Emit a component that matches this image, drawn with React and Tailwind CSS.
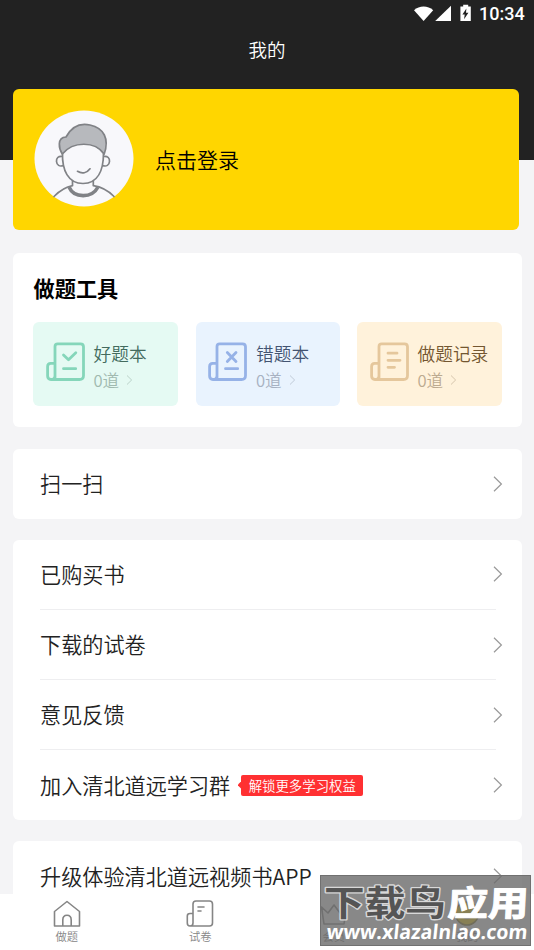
import React from "react";

function Chevron({ className = "" }) {
  return (
    <svg className={className} width="10" height="16" viewBox="0 0 10 16" fill="none" stroke="currentColor" strokeWidth="1.2">
      <path d="M1 .8 8.4 8 1 15.2" />
    </svg>
  );
}

function StatusBar() {
  return (
    <div className="flex h-7 items-center justify-end pr-[9px] text-white">
      <svg width="58" height="20" viewBox="0 0 58 20" fill="currentColor">
        <path d="M0 6.2C5.4 1.4 13.8 1.4 19.2 6.2L9.6 17Z" />
        <path d="M37 1.8V17H21.2Z" />
        <path d="M49.2 .8h5v1.6h2.6V17H46.4V2.4h2.8z" />
        <path d="M52.4 4.4 48.4 10.5h2.3L50.1 15.2 54.4 8.8h-2.4z" fill="#222" />
      </svg>
      <span className="ml-[7px] w-[46px] whitespace-nowrap font-['Roboto',sans-serif] text-[18px] font-medium leading-7">10:34</span>
    </div>
  );
}

function Avatar() {
  return (
    <svg className="-mt-[2px]" width="100" height="97" viewBox="0 0 100 97" fill="none" stroke="#808286" strokeWidth="1.7" strokeLinecap="round" strokeLinejoin="round">
      <ellipse cx="50" cy="48.5" rx="49.5" ry="48" fill="#f8f8fb" stroke="none" />
      <path d="M20 86.5C26 80.5 32 77 38.5 75.7V70M80 86.5C74 80.5 68 77 59.3 75.7V70" />
      <path d="M35 77C40 88.5 58 88.5 64 77" strokeWidth="3.6" strokeLinecap="butt" />
      <path d="M29 46.5C24 45.5 22.2 48.5 22.5 51.5C22.8 55 25.5 57 29.5 55.5M69 46.5C74 45.5 75.8 48.5 75.5 51.5C75.2 55 72.5 57 68.5 55.5" />
      <path d="M28.5 43C28 60 34 73.5 49 73.5S69.5 60 69.5 43C60 30 38 30 28.5 43Z" fill="#f8f8fb" />
      <path d="M28.3 44C25 39 22.5 27.5 32 27C38 16 47 13 56 15C70 18 75.5 29 70.2 44C61 31 39 31 28.3 44Z" fill="#b7b9bd" />
      <path d="M43.5 61.3C48 64.2 53 63 56 58.8" />
    </svg>
  );
}

function BookIcon({ kind }) {
  return (
    <svg className="mt-[19.5px] shrink-0" width="40" height="40" viewBox="0 0 40 40" fill="none" stroke="currentColor" strokeWidth="2.8" strokeLinecap="round" strokeLinejoin="round">
      <path d="M9 35.5V4.5Q9 1.8 11.7 1.8H34.5Q37.5 1.8 37.5 4.8V33.5Q37.5 37.5 33.5 37.5H5Q1.6 37.5 1.6 34V24.5Q1.6 21.4 4.7 21.4H9M9 33.5Q9 37.5 5.2 37.5" />
      {kind === "check" && <path d="m17.5 13 5 4.8 7.3-7M17.5 26.7h12.2" />}
      {kind === "cross" && <path d="m19.3 10.5 8.7 9m0-9-8.7 9M17.5 26.7h12.2" />}
      {kind === "lines" && <path d="M18 11.2h9M18 18.3h12M18 25.3h6.5" />}
    </svg>
  );
}

const tools = [
  { name: "好题本", kind: "check", box: "bg-[#e5faf3]", icon: "text-[#85d6ba]", title: "text-[#436b5e]", sub: "text-[#a0b9af]", margin: "" },
  { name: "错题本", kind: "cross", box: "bg-[#e9f3fe]", icon: "text-[#96b2e7]", title: "text-[#435371]", sub: "text-[#a7b1c2]", margin: "ml-[18px]" },
  { name: "做题记录", kind: "lines", box: "bg-[#fff2db]", icon: "text-[#e5c79c]", title: "text-[#735630]", sub: "text-[#bcaa90]", margin: "ml-[17px]" },
];

function ToolBox({ tool }) {
  return (
    <div className={`flex h-[84px] w-[144.5px] rounded-md pl-[12.5px] ${tool.box} ${tool.margin}`}>
      <div className={tool.icon}><BookIcon kind={tool.kind} /></div>
      <div className="ml-[8px] whitespace-nowrap pt-[19px]">
        <div className={`text-[17.7px] leading-6 ${tool.title}`}>{tool.name}</div>
        <div className={`mt-[2.5px] flex items-center text-[16.6px] leading-6 ${tool.sub}`}>
          0道
          <Chevron className="ml-[7px] h-[10px] w-[7px] opacity-80" />
        </div>
      </div>
    </div>
  );
}

function Row({ label, badge, divider }) {
  return (
    <div className="pl-[27px] pr-[26px]">
      <div className={`-mr-[7px] flex items-center text-[21.15px] text-[#222] ${divider ? "h-[69.2px]" : "h-[70px]"}`}>
        <span className="whitespace-nowrap pb-[2px]">{label}</span>
        {badge && (
          <div className="ml-[7.5px] flex items-center">
            <svg width="3.5" height="8" viewBox="0 0 5 10" preserveAspectRatio="none" fill="#ff3032"><path d="M5 0v10L0 5.7V4.3z" /></svg>
            <span className="flex h-[21.5px] w-[122px] items-center justify-center whitespace-nowrap rounded-[2px] bg-[#ff3032] text-[13.4px] text-white">{badge}</span>
          </div>
        )}
        <Chevron className="ml-auto text-[#999]" />
      </div>
      {divider && <div className="h-px bg-[#eeeef0]" />}
    </div>
  );
}

function Tab({ label, children }) {
  return (
    <div className="flex flex-1 flex-col items-center pt-[6px] text-[#858585]">
      <svg width="28" height="28" viewBox="0 0 28 28" fill="none" stroke="currentColor" strokeWidth="1.6" strokeLinejoin="round" strokeLinecap="round">
        {children}
      </svg>
      <span className="mt-px text-[11.3px] leading-[15px]">{label}</span>
    </div>
  );
}

function Watermark() {
  return (
    <div className="absolute left-[319.5px] top-[875px] h-[71px] w-[211.5px] border border-[#707070] bg-[#6a6a6a]/80">
      <svg width="210" height="69" viewBox="0 0 210 69" className="overflow-visible font-['Noto_Sans_CJK_SC',sans-serif]">
        <g transform="translate(0 40)" fontSize="35" fontWeight="700" strokeLinejoin="round" paintOrder="stroke">
          <text x="3" y="0" textLength="122" lengthAdjust="spacingAndGlyphs" fill="#555" stroke="#d8d8d8" strokeWidth="2.6">下载鸟</text>
          <g transform="skewX(-3)">
            <text x="126" y="0" textLength="81" lengthAdjust="spacingAndGlyphs" fill="#fff" stroke="#fff" strokeWidth="1">应用</text>
          </g>
        </g>
        <g transform="translate(0 63) skewX(-6)">
          <text x="5" y="0" textLength="201" lengthAdjust="spacingAndGlyphs" fill="#fff" fontSize="20" fontWeight="700" fontFamily="Open Sans, sans-serif">www.xlazalnlao.com</text>
        </g>
      </svg>
    </div>
  );
}

export default function App() {
  return (
    <div className="relative flex h-[950px] w-[534px] flex-col overflow-hidden bg-[#f4f4f6] font-['Noto_Sans_CJK_SC',sans-serif] font-[350]">
      <header className="h-[160px] shrink-0 bg-[#222]">
        <StatusBar />
        <h1 className="pt-[7px] text-center text-[18.5px] leading-7 text-white">我的</h1>
      </header>

      <main className="-mt-[71px] min-h-0 flex-1 overflow-hidden pl-[13px] pr-[12px]">
        <section className="flex h-[141px] w-[505.5px] items-center rounded-md bg-[#ffd600] pl-[21px]">
          <Avatar />
          <span className="ml-[21px] text-[21px] text-black">点击登录</span>
        </section>

        <section className="mt-[22.5px] h-[174.9px] rounded-md bg-white pl-[20.5px] pt-[19.5px]">
          <h2 className="text-[21.2px] font-bold leading-8 text-black">做题工具</h2>
          <div className="-ml-[0.5px] mt-[18px] flex">
            {tools.map((tool) => <ToolBox key={tool.name} tool={tool} />)}
          </div>
        </section>

        <section className="mt-[21.3px] rounded-md bg-white">
          <Row label="扫一扫" />
        </section>

        <section className="mt-[21.2px] rounded-md bg-white">
          <Row label="已购买书" divider />
          <Row label="下载的试卷" divider />
          <Row label="意见反馈" divider />
          <Row label="加入清北道远学习群" badge="解锁更多学习权益" />
        </section>

        <section className="mt-[21px] rounded-t-md bg-white">
          <Row label="升级体验清北道远视频书APP" />
        </section>
      </main>

      <nav className="flex h-14 shrink-0 bg-white">
        <Tab label="做题">
          <path d="M1.5 11.5 14 1.5 26.5 11.5V26H1.5ZM9.8 26V20Q9.8 15.3 14 15.3T18.2 20V26" />
        </Tab>
        <Tab label="试卷">
          <path d="M7 23V4Q7 1 10 1H23.5Q26.5 1 26.5 4V23Q26.5 26 23.5 26H4Q1.3 26 1.3 23V16Q1.3 13.5 4 13.5H7V23Q7 26 4 26M12 7h6M12 11h3" />
        </Tab>
        <Tab label="会员">
          <path d="M1.5 7 8 13 14 5 20 13 26.5 7 24 24H4Z" />
        </Tab>
        <Tab label="我的">
          <circle cx="14" cy="13.5" r="11.5" fill="#ffd600" stroke="#8a7a20" />
          <path d="M9 16Q14 21 19 16" />
        </Tab>
      </nav>

      <Watermark />
    </div>
  );
}
